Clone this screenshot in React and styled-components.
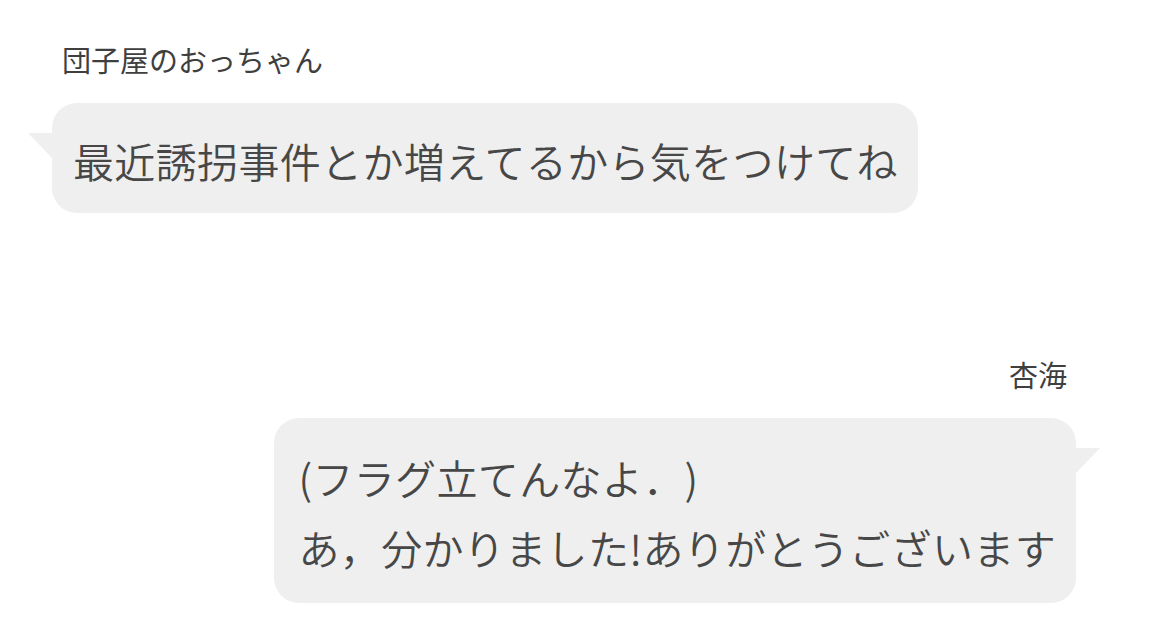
import styled, { createGlobalStyle } from 'styled-components';

const messages = [
	{ id: 1, name: '団子屋のおっちゃん', side: 'left', lines: ['最近誘拐事件とか増えてるから気をつけてね'] },
	{ id: 2, name: '杏海', side: 'right', lines: ['(フラグ立てんなよ．)', 'あ，分かりました!ありがとうございます'] },
];

const App = () => {
	return (
		<>
			<GlobalStyle />
			<Chat>
				{messages.map((msg) => {
					const { id, name, side, lines } = msg;
					return (
						<Message key={id} $side={side}>
							<Name $side={side}>{name}</Name>
							<Bubble $side={side}>
								{lines.map((line, index) => (
									<Line key={index}>{line}</Line>
								))}
							</Bubble>
						</Message>
					);
				})}
			</Chat>
		</>
	);
};

const GlobalStyle = createGlobalStyle`
	* {
		box-sizing: border-box;
	}

	body {
		margin: 0;
		background: #ffffff;
		font-family: 'Noto Sans CJK JP', 'Noto Sans', sans-serif;
	}
`;

const Chat = styled.main`
	width: 1149px;
	height: 642px;
	padding: 39px 49px 0 28px;
	display: flex;
	flex-direction: column;
	gap: 141px;
	overflow: hidden;
`;

const Message = styled.section`
	display: flex;
	flex-direction: column;
	align-items: ${({ $side }) => ($side === 'left' ? 'flex-start' : 'flex-end')};
	gap: 24px;
`;

const Name = styled.h4`
	margin: 0 ${({ $side }) => ($side === 'left' ? '0 0 34px' : '33px 0 0')};
	font-size: 29px;
	line-height: 40px;
	font-weight: 400;
	color: #3f3f3f;
`;

const Bubble = styled.div`
	position: relative;
	margin: ${({ $side }) => ($side === 'left' ? '0 0 0 24px' : '0 24px 0 0')};
	padding: ${({ $side }) => ($side === 'left' ? '22px 20px 18px 21px' : '24px 20px 21px 24px')};
	background: #efefef;
	border-radius: 25px;

	/* speech tail */
	&::before {
		content: '';
		position: absolute;
		top: 30px;
		${({ $side }) => ($side === 'left' ? 'left: -24px;' : 'right: -24px;')}
		width: 0;
		height: 0;
		border-top: 25px solid #efefef;
		${({ $side }) =>
			$side === 'left' ? 'border-left: 24px solid transparent;' : 'border-right: 24px solid transparent;'}
	}
`;

const Line = styled.p`
	margin: 0;
	font-size: 41px;
	line-height: 70px;
	font-weight: 350;
	letter-spacing: 0.35px;
	color: #474747;
	white-space: nowrap;
	text-spacing-trim: space-all;
`;

export default App;
